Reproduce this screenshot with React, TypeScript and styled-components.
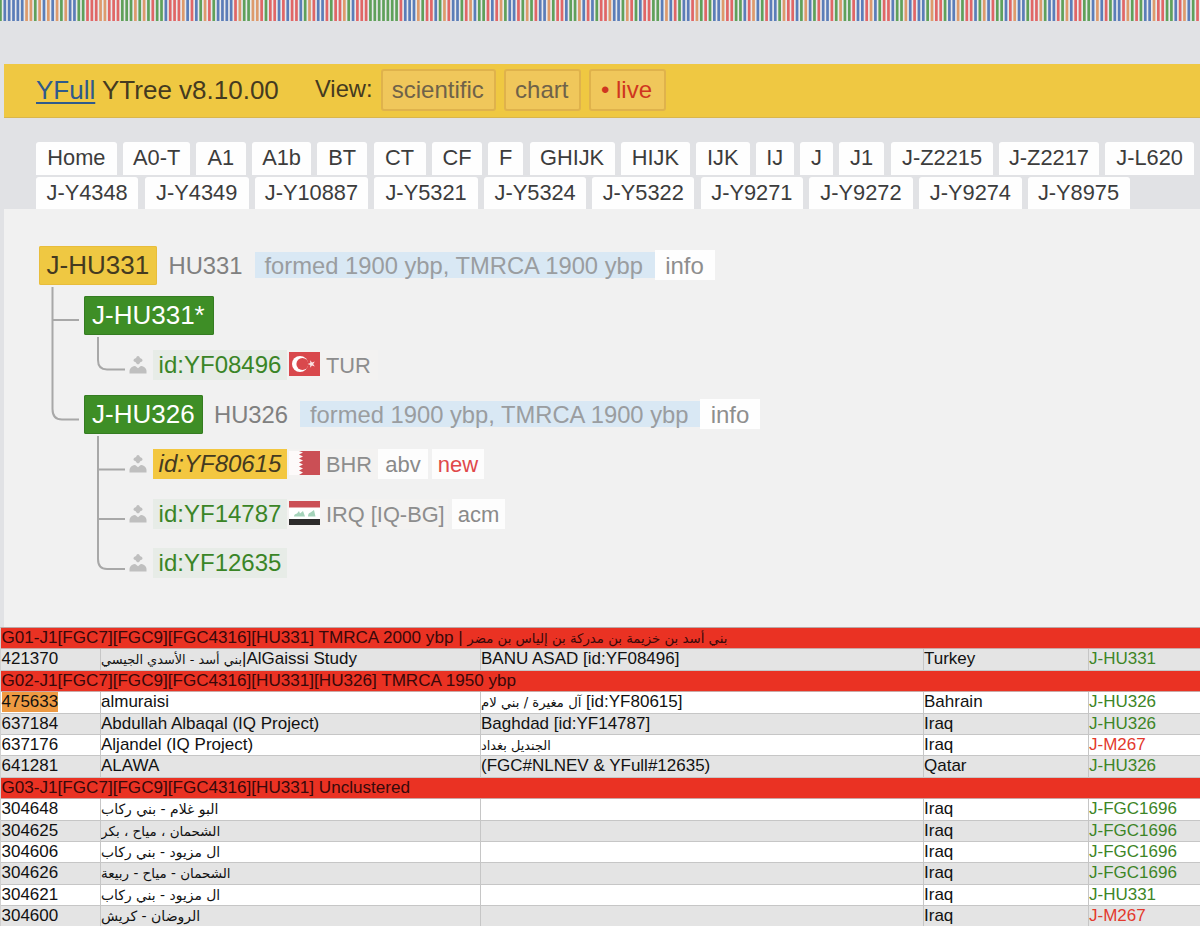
import React from "react";
import styled, { createGlobalStyle } from "styled-components";

const GlobalStyle = createGlobalStyle`
  * { box-sizing: border-box; }
  body { margin: 0; background: #e1e2e5; overflow: hidden; }
`;

const Page = styled.div`
  width: 1200px;
  height: 926px;
  overflow: hidden;
  display: flex;
  flex-direction: column;
  background: #e1e2e5;
  font-family: "Liberation Sans", Arial, "DejaVu Sans", sans-serif;
`;

const Stripes = styled.svg`
  display: block;
  flex: none;
`;

const Header = styled.header`
  flex: none;
  display: flex;
  align-items: center;
  height: 54px;
  margin: 43px 0 0 4px;
  padding: 0 0 2px 32px;
  background: #efc842;
  border-bottom: 1px solid #d9b64c;
  color: #443a20;
`;

const Title = styled.h1`
  margin: 0;
  width: 279px;
  font-size: 26px;
  font-weight: 400;
  line-height: 30px;
  white-space: pre;
`;

const BrandLink = styled.a`
  color: #2f5a8c;
  text-decoration: underline;
  text-decoration-thickness: 2px;
  text-underline-offset: 3px;
`;

const ViewLabel = styled.span`
  width: 65.5px;
  font-size: 23.7px;
`;

const ViewButton = styled.button<{ $width: number; $live?: boolean }>`
  width: ${(p) => p.$width}px;
  height: 42px;
  margin-right: 8px;
  padding: 0 1px 0 0;
  border: 2px solid #dfb24c;
  border-radius: 3px;
  background: #f0c75b;
  color: ${(p) => (p.$live ? "#cf3620" : "#6f6249")};
  font: inherit;
  font-size: 24px;
  white-space: nowrap;
`;

const Tabs = styled.nav`
  flex: none;
  display: flex;
  flex-direction: column;
  gap: 2px;
  height: 91px;
  padding: 24px 0 0 36px;
`;

const TabRow = styled.div`
  display: flex;
`;

const Tab = styled.a<{ $width: number; $gap: number }>`
  flex: none;
  width: ${(p) => p.$width}px;
  height: 32.5px;
  margin-right: ${(p) => p.$gap}px;
  border-radius: 3px 3px 0 0;
  background: #fefefe;
  color: #3c3c3c;
  font-size: 21.8px;
  line-height: 32.4px;
  text-align: center;
  white-space: nowrap;
`;

const TreePanel = styled.main`
  flex: none;
  display: grid;
  height: 418px;
  margin-left: 4px;
  background: #f1f1f1;
`;

const Connectors = styled.svg`
  grid-area: 1 / 1;
`;

const TreeList = styled.ul`
  grid-area: 1 / 1;
  margin: 0;
  padding: 31.5px 0 0 34.5px;
  list-style: none;
`;

const TreeRow = styled.li<{ $indent: number }>`
  display: flex;
  align-items: center;
  height: 49.7px;
  padding-left: ${(p) => p.$indent}px;
  white-space: nowrap;
`;

const Clade = styled.span<{ $gold?: boolean; $width: number }>`
  width: ${(p) => p.$width}px;
  height: 39px;
  padding-left: 8px;
  border-radius: 2px;
  background: ${(p) => (p.$gold ? "#efc842" : "#3e8e26")};
  box-shadow: inset 0 0 0 1px ${(p) => (p.$gold ? "#e8bd3c" : "#357c22")};
  color: ${(p) => (p.$gold ? "#443a20" : "#fff")};
  font-size: 26px;
  line-height: 38px;
`;

const Snp = styled.span`
  width: 86px;
  padding-top: 2px;
  margin-left: 11.5px;
  color: #808080;
  font-size: 23.8px;
`;

const Age = styled.span`
  width: 400px;
  height: 26px;
  padding-right: 1.5px;
  background: #d9e8f4;
  color: #9a9da0;
  font-size: 23.75px;
  line-height: 27px;
  text-align: center;
`;

const Info = styled.span`
  width: 60px;
  height: 30px;
  background: #fefefe;
  color: #8e8e8e;
  font-size: 24px;
  line-height: 31px;
  text-align: center;
`;

const Sample = styled.span<{ $gold?: boolean }>`
  width: 134px;
  height: 30px;
  margin-left: 6.5px;
  background: ${(p) => (p.$gold ? "#f3c740" : "#e7ece7")};
  color: ${(p) => (p.$gold ? "#443a20" : "#3a8526")};
  font-size: 24px;
  font-style: ${(p) => (p.$gold ? "italic" : "normal")};
  line-height: 30px;
  text-align: center;
`;

const Country = styled.span<{ $width: number }>`
  display: flex;
  align-items: flex-start;
  width: ${(p) => p.$width}px;
  height: 30px;
  padding: 2px 0 0 2px;
  background: #f3f2f1;
  color: #8d8d8d;
  font-size: 21.8px;
  line-height: 28px;
  gap: 6px;
`;

const Tag = styled.span<{ $width: number; $gap: number; $alert?: boolean }>`
  width: ${(p) => p.$width}px;
  height: 30px;
  margin-left: ${(p) => p.$gap}px;
  background: #fdfdfd;
  color: ${(p) => (p.$alert ? "#e0484a" : "#8a8a8a")};
  font-size: 22px;
  line-height: 32px;
  text-align: center;
`;

const Table = styled.section`
  flex: none;
  display: flex;
  flex-direction: column;
  border-top: 1px solid #b9a9a8;
  border-left: 1px solid #d0d0d0;
  font-size: 17px;
  color: #111;
`;

const GroupRow = styled.div`
  height: 21.4px;
  padding-left: 0.5px;
  border-bottom: 1px solid #c9a8a6;
  background: #ea3223;
  color: #38090a;
  font-size: 17.1px;
  line-height: 20px;
  white-space: pre;
`;

const DataRow = styled.div<{ $shade: boolean }>`
  display: grid;
  grid-template-columns: 99.5px 380px 443px 165px 1fr;
  height: 21.4px;
  border-bottom: 1px solid #c6c6c6;
  background: ${(p) => (p.$shade ? "#e4e4e4" : "#fff")};
  line-height: 20px;
  white-space: pre;
`;

const Cell = styled.div<{ $tone?: "green" | "red" }>`
  overflow: hidden;
  padding-left: 0.5px;
  border-right: 1px solid #c6c6c6;
  color: ${(p) => (p.$tone === "green" ? "#3d8527" : p.$tone === "red" ? "#e3392d" : "inherit")};

  &:last-child {
    border-right: 0;
  }
`;

const Kit = styled.span<{ $marked?: boolean }>`
  display: inline-block;
  background: ${(p) => (p.$marked ? "#ee9a42" : "transparent")};
`;

const Arabic = styled.bdi<{ $size: number }>`
  font-family: "DejaVu Sans", sans-serif;
  font-size: ${(p) => p.$size}px;
  line-height: 1;
`;

const stripeColors: Record<string, string> = {
  b: "#5b7db8",
  g: "#5fa05a",
  r: "#e06666",
  o: "#dd9a6c",
};
const stripeCode =
  "gbbbbboogobobogobbggrrroorrrgggogogrggbrrrobrbgorgbbbbroggoorgrrbrbrrbgorbbrgrrogbrrrgggggggrbbbogrr" +
  "bgorbbgrobggrbrogbbrgogrbbogrrbggobrbgrrobbgorgbrrggbobrgbbrogrgbborrggbrobgrbbgorrbgobgrbbrgoggrbbr" +
  "obgrrbggobrbbgorrgbbogrrbgobrggbrobbgrrogbbrgobrrggbobrgbbrogrgbborrggbrobgr";

function StripeBar() {
  return (
    <Stripes width="1200" height="21" viewBox="0 0 1200 21">
      <rect width="1200" height="21" fill="#e9eaec" />
      {stripeCode.split("").map((c, i) => (
        <rect key={i} x={i * 4.353 - 0.9} y="0" width="2.7" height="21" fill={stripeColors[c]} />
      ))}
    </Stripes>
  );
}

const tabs1: [string, number, number][] = [
  ["Home", 80.7, 6.3], ["A0-T", 67.3, 5.4], ["A1", 50.3, 6.3], ["A1b", 58.7, 6], ["BT", 50.3, 6.4],
  ["CT", 52, 6.3], ["CF", 50.3, 6], ["F", 35, 6.4], ["GHIJK", 84.9, 6], ["HIJK", 69.6, 6],
  ["IJK", 53.4, 6], ["IJ", 38.6, 6], ["J", 32.7, 6.3], ["J1", 45, 7], ["J-Z2215", 102, 6],
  ["J-Z2217", 99.7, 6.3], ["J-L620", 89, 0],
];
const tabs2: [string, number, number][] = [
  ["J-Y4348", 102.3, 6.4], ["J-Y4349", 104, 6.3], ["J-Y10887", 112.9, 6.4], ["J-Y5321", 103.6, 6.3],
  ["J-Y5324", 102, 6], ["J-Y5322", 102.2, 6.4], ["J-Y9271", 102.2, 6], ["J-Y9272", 104, 6.4],
  ["J-Y9274", 102.2, 6], ["J-Y8975", 102, 0],
];

const PersonIcon = () => (
  <svg width="18" height="20" viewBox="0 0 18 20" fill="#bfbfbf">
    <path d="M9 1 Q10.4 1 11 3 Q13.600 3.700 13.600 5.200 Q13.600 6.500 11.300 7.300 Q10.500 9.400 9 9.400 Q7.500 9.400 6.700 7.300 Q4.400 6.500 4.400 5.200 Q4.400 3.700 7 3 Q7.600 1 9 1Z" />
    <path d="M0.500 18.500 V15.800 Q1 12.500 4.500 11.200 Q6.500 10.700 7.500 12 L9 13.200 L10.500 12 Q11.500 10.700 13.500 11.200 Q17 12.500 17.500 15.800 V18.500 Z" />
  </svg>
);

const Flag = ({ code }: { code: string }) => (
  <svg width="31" height="24" viewBox="0 0 31 24">
    {code === "TUR" && (
      <>
        <rect width="31" height="24" fill="#d9494d" />
        <circle cx="11" cy="12" r="8" fill="#fff" />
        <circle cx="13.4" cy="12" r="6" fill="#d9494d" />
        <path d="M18.5 12l2.7-.9V8.2l1.8 2.3 2.8-.9L24.2 12l1.6 2.4-2.8-.9-1.8 2.3v-2.9z" fill="#fbe4e4" />
      </>
    )}
    {code === "BHR" && (
      <>
        <rect width="31" height="24" fill="#fdfafa" />
        <path d="M31 0H10l4 1.5-4 2 4 2-4 2 4 2-4 2 4 2-4 2 4 2-4 2 4 2-4 2.500H31z" fill="#cb4f55" />
      </>
    )}
    {code === "IRQ" && (
      <>
        <rect width="31" height="24" fill="#fff" />
        <rect width="31" height="6.5" fill="#cb4f55" />
        <rect y="18" width="31" height="6" fill="#2d2b2b" />
        <path d="M5 15.500q0-2.500 3-3l2-2.500 1 2.500 3-2.500 2 5.500zM19 15.500q0-3.500 2.500-4L25 9l1.500 6.500z" fill="#a5d3ba" />
      </>
    )}
  </svg>
);

function Tree() {
  return (
    <TreePanel>
      <Connectors width="760" height="400" viewBox="4 209 760 400" fill="none" stroke="#a8a8a8" strokeWidth="2">
        <path d="M52.5 287V409Q52.5 419.5 62 419.5H79M52.5 320H79" />
        <path d="M98 337V360Q98 369.5 107 369.5H125" />
        <path d="M98 436V559Q98 569 107 569H125M98 469.5H125M98 519H125" />
      </Connectors>
      <TreeList>
        <TreeRow $indent={0}>
          <Clade $gold $width={118.5}>J-HU331</Clade>
          <Snp>HU331</Snp>
          <Age>formed 1900 ybp, TMRCA 1900 ybp</Age>
          <Info>info</Info>
        </TreeRow>
        <TreeRow $indent={45.5}>
          <Clade $width={129.5}>J-HU331*</Clade>
        </TreeRow>
        <TreeRow $indent={90}>
          <PersonIcon />
          <Sample>id:YF08496</Sample>
          <Country $width={91}><Flag code="TUR" />TUR</Country>
        </TreeRow>
        <TreeRow $indent={45.5}>
          <Clade $width={118.5}>J-HU326</Clade>
          <Snp>HU326</Snp>
          <Age>formed 1900 ybp, TMRCA 1900 ybp</Age>
          <Info>info</Info>
        </TreeRow>
        <TreeRow $indent={90}>
          <PersonIcon />
          <Sample $gold>id:YF80615</Sample>
          <Country $width={91}><Flag code="BHR" />BHR</Country>
          <Tag $width={50} $gap={0}>abv</Tag>
          <Tag $width={52} $gap={4} $alert>new</Tag>
        </TreeRow>
        <TreeRow $indent={90}>
          <PersonIcon />
          <Sample>id:YF14787</Sample>
          <Country $width={161}><Flag code="IRQ" />IRQ [IQ-BG]</Country>
          <Tag $width={53} $gap={4}>acm</Tag>
        </TreeRow>
        <TreeRow $indent={90}>
          <PersonIcon />
          <Sample>id:YF12635</Sample>
        </TreeRow>
      </TreeList>
    </TreePanel>
  );
}

interface Row {
  kit: string;
  name: React.ReactNode;
  origin?: React.ReactNode;
  country: string;
  group: string;
  marked?: boolean;
}

const group1: Row[] = [
  { kit: "421370", name: <><Arabic $size={12.9}>بني أسد - الأسدي الجيسي</Arabic>|AlGaissi Study</>, origin: "BANU ASAD [id:YF08496]", country: "Turkey", group: "J-HU331" },
];
const group2: Row[] = [
  { kit: "475633", name: "almuraisi", origin: <><Arabic $size={13.2}>آل مغيرة / بني لام</Arabic> [id:YF80615]</>, country: "Bahrain", group: "J-HU326", marked: true },
  { kit: "637184", name: "Abdullah Albaqal (IQ Project)", origin: "Baghdad [id:YF14787]", country: "Iraq", group: "J-HU326" },
  { kit: "637176", name: "Aljandel (IQ Project)", origin: <Arabic $size={12.9}>الجنديل بغداد</Arabic>, country: "Iraq", group: "J-M267" },
  { kit: "641281", name: "ALAWA", origin: "(FGC#NLNEV & YFull#12635)", country: "Qatar", group: "J-HU326" },
];
const group3: Row[] = [
  { kit: "304648", name: <Arabic $size={14}>البو غلام - بني ركاب</Arabic>, country: "Iraq", group: "J-FGC1696" },
  { kit: "304625", name: <Arabic $size={13.5}>الشحمان ، مياح ، بكر</Arabic>, country: "Iraq", group: "J-FGC1696" },
  { kit: "304606", name: <Arabic $size={13.9}>ال مزيود - بني ركاب</Arabic>, country: "Iraq", group: "J-FGC1696" },
  { kit: "304626", name: <Arabic $size={13.5}>الشحمان - مياح - ربيعة</Arabic>, country: "Iraq", group: "J-FGC1696" },
  { kit: "304621", name: <Arabic $size={13.9}>ال مزيود - بني ركاب</Arabic>, country: "Iraq", group: "J-HU331" },
  { kit: "304600", name: <Arabic $size={14}>الروضان - كريش</Arabic>, country: "Iraq", group: "J-M267" },
];

function Rows({ rows, shadeFirst }: { rows: Row[]; shadeFirst?: boolean }) {
  return (
    <>
      {rows.map((r, i) => (
        <DataRow key={r.kit} $shade={(i % 2 === 1) !== !!shadeFirst}>
          <Cell><Kit $marked={r.marked}>{r.kit}</Kit></Cell>
          <Cell>{r.name}</Cell>
          <Cell>{r.origin}</Cell>
          <Cell>{r.country}</Cell>
          <Cell $tone={r.group === "J-M267" ? "red" : "green"}>{r.group}</Cell>
        </DataRow>
      ))}
    </>
  );
}

export default function App() {
  return (
    <Page>
      <GlobalStyle />
      <StripeBar />
      <Header>
        <Title><BrandLink>YFull</BrandLink> YTree v8.10.00</Title>
        <ViewLabel>View:</ViewLabel>
        <ViewButton $width={115.5}>scientific</ViewButton>
        <ViewButton $width={76.5}>chart</ViewButton>
        <ViewButton $width={77} $live>• live</ViewButton>
      </Header>
      <Tabs>
        {[tabs1, tabs2].map((row, i) => (
          <TabRow key={i}>
            {row.map(([label, width, gap]) => (
              <Tab key={label} $width={width} $gap={gap}>{label}</Tab>
            ))}
          </TabRow>
        ))}
      </Tabs>
      <Tree />
      <Table>
        <GroupRow>G01-J1[FGC7][FGC9][FGC4316][HU331] TMRCA 2000 ybp | <Arabic $size={13.3}>بني أسد بن خزيمة بن مدركة بن إلياس بن مضر</Arabic></GroupRow>
        <Rows rows={group1} shadeFirst />
        <GroupRow>G02-J1[FGC7][FGC9][FGC4316][HU331][HU326] TMRCA 1950 ybp</GroupRow>
        <Rows rows={group2} />
        <GroupRow>G03-J1[FGC7][FGC9][FGC4316][HU331] Unclustered</GroupRow>
        <Rows rows={group3} />
      </Table>
    </Page>
  );
}
